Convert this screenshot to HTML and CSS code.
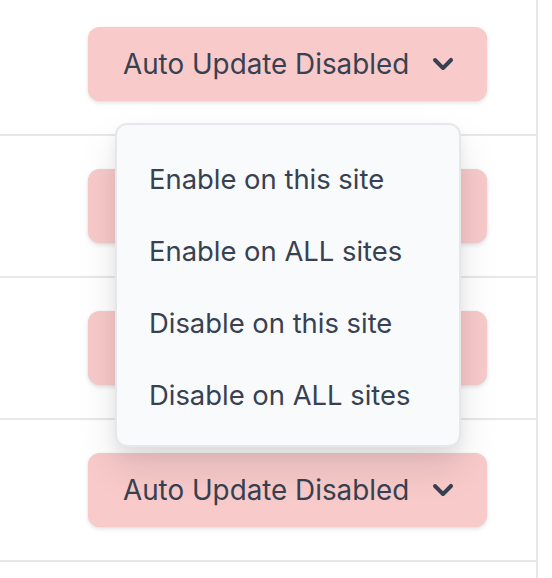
FILE: index.html
```html
<!DOCTYPE html>
<html>
<head>
<meta charset="utf-8">
<link rel="stylesheet" href="styles.css">
</head>
<body>
<div class="list">
  <div class="row"><button class="btn"><span>Auto Update Disabled</span><svg class="chev" viewBox="0 0 20 20"><path d="M5.293 7.293a1 1 0 011.414 0L10 10.586l3.293-3.293a1 1 0 111.414 1.414l-4 4a1 1 0 01-1.414 0l-4-4a1 1 0 010-1.414z"/></svg></button></div>
  <div class="row"><button class="btn"><span>Auto Update Disabled</span><svg class="chev" viewBox="0 0 20 20"><path d="M5.293 7.293a1 1 0 011.414 0L10 10.586l3.293-3.293a1 1 0 111.414 1.414l-4 4a1 1 0 01-1.414 0l-4-4a1 1 0 010-1.414z"/></svg></button></div>
  <div class="row"><button class="btn"><span>Auto Update Disabled</span><svg class="chev" viewBox="0 0 20 20"><path d="M5.293 7.293a1 1 0 011.414 0L10 10.586l3.293-3.293a1 1 0 111.414 1.414l-4 4a1 1 0 01-1.414 0l-4-4a1 1 0 010-1.414z"/></svg></button></div>
  <div class="row"><button class="btn"><span>Auto Update Disabled</span><svg class="chev" viewBox="0 0 20 20"><path d="M5.293 7.293a1 1 0 011.414 0L10 10.586l3.293-3.293a1 1 0 111.414 1.414l-4 4a1 1 0 01-1.414 0l-4-4a1 1 0 010-1.414z"/></svg></button></div>
  <div class="row row-end"></div>
  <div class="menu">
    <div class="item">Enable on this site</div>
    <div class="item">Enable on ALL sites</div>
    <div class="item">Disable on this site</div>
    <div class="item">Disable on ALL sites</div>
  </div>
</div>
</body>
</html>
```
FILE: styles.css
```css
html, body {
  margin: 0;
  padding: 0;
  background: #ffffff;
  font-family: Inter, "Noto Sans", sans-serif;
  overflow: hidden;
}
.list {
  position: relative;
  width: 536px;
  margin-top: -6px;
  border-right: 2px solid #e5e7eb;
}
.row {
  height: 140px;
  border-bottom: 2px solid #e5e7eb;
  display: flex;
  align-items: center;
  justify-content: flex-end;
  padding-right: 49px;
}
.row-end {
  height: 20px;
  border-bottom: none;
}
.btn {
  height: 74px;
  width: 399px;
  box-sizing: border-box;
  display: flex;
  align-items: center;
  padding: 0 24px 0 35px;
  background: #f8caca;
  border: none;
  border-radius: 12px;
  box-shadow: 0 2px 4px rgba(0,0,0,0.12), 0 0 1px rgba(0,0,0,0.1);
  color: #374151;
  font-family: Inter, "Noto Sans", sans-serif;
  font-size: 27.8px;
  font-weight: 400;
}
.chev {
  width: 40px;
  height: 40px;
  fill: #374151;
  margin-left: auto;
}
.menu {
  position: absolute;
  left: 115px;
  top: 129px;
  width: 346px;
  height: 324px;
  box-sizing: border-box;
  background: #f9fafb;
  border: 2px solid #e5e7eb;
  border-radius: 12px;
  box-shadow: 0 20px 40px rgba(0,0,0,0.1), 0 8px 14px rgba(0,0,0,0.06);
  padding: 18px 0;
}
.item {
  height: 72px;
  display: flex;
  align-items: center;
  padding-left: 32px;
  color: #374151;
  font-size: 27.4px;
}
```
